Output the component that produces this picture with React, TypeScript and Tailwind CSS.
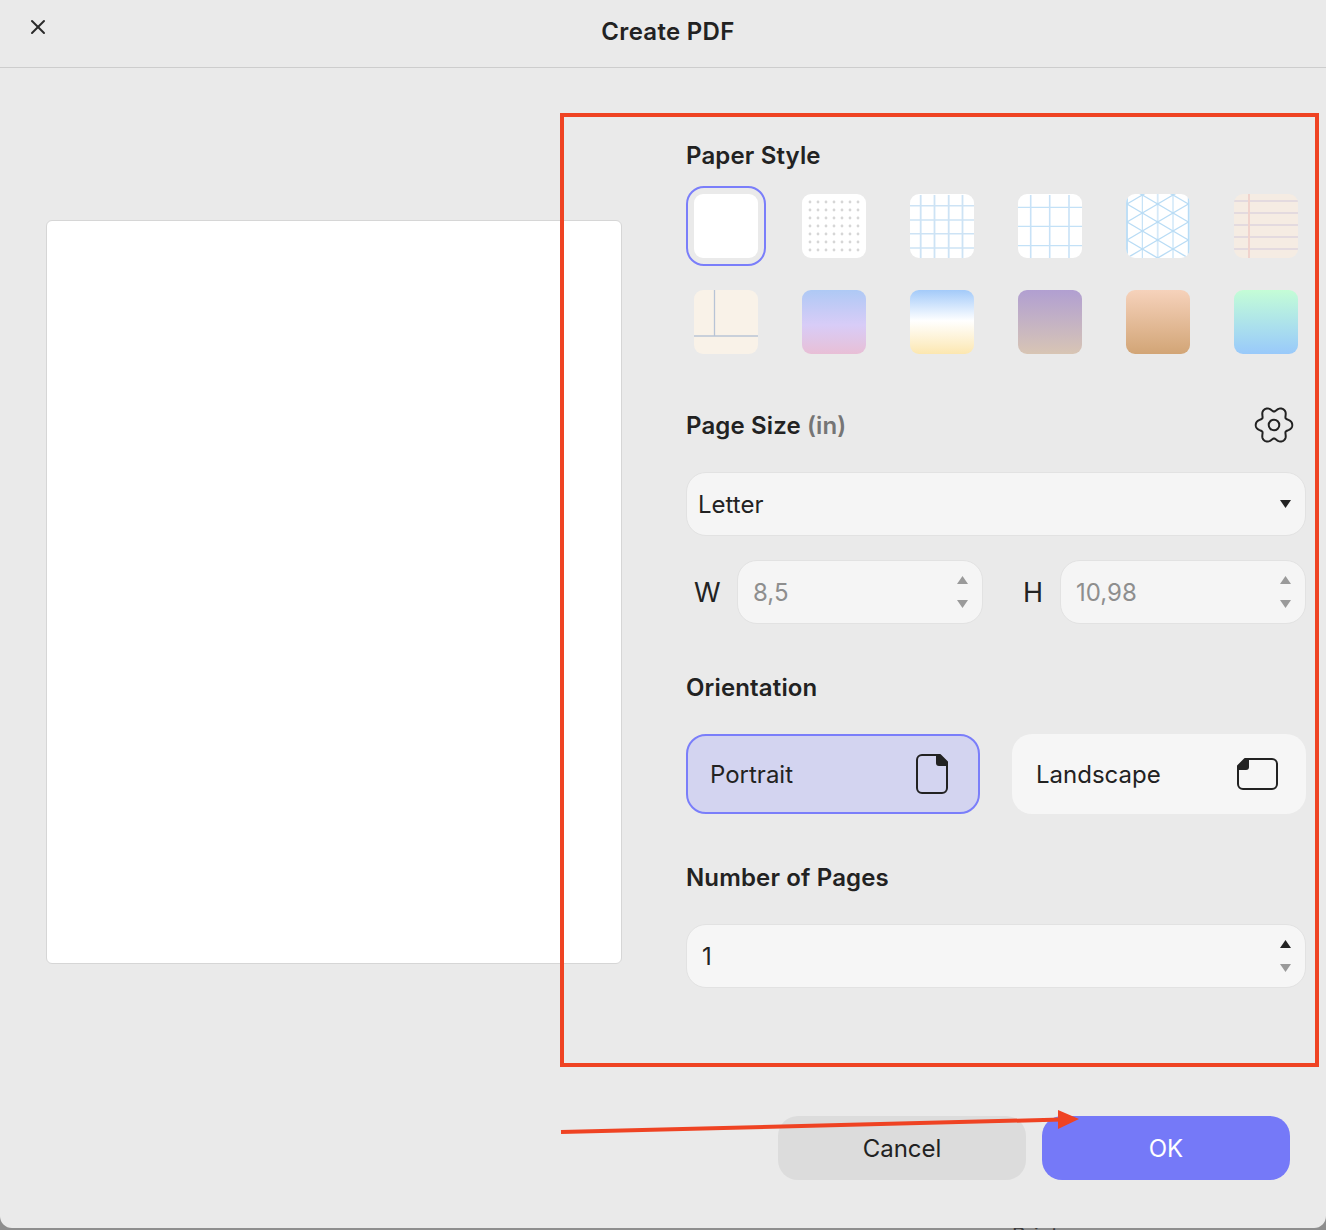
import { X } from 'lucide-react';

const FONT = "font-['Inter','Liberation_Sans',sans-serif]";

const DOTS = [8, 16, 24, 32, 40, 48, 56];
const ISO_TOP = [1, 19, 37, 55, 73];
const ISO_MID = [-8, 10, 28, 46, 64];

// six flat lobes with tight notches, the same outline the reference cog has
const GEAR_PATH =
    Array.from({ length: 180 }, (_, i) => {
        const angle = (i / 180) * Math.PI * 2;
        const radius = 16.2 + 2.4 * Math.cos(6 * angle) - 0.35 * Math.cos(12 * angle);
        const x = 20 + radius * Math.cos(angle);
        const y = 19 + radius * Math.sin(angle);
        return `${i === 0 ? 'M' : 'L'}${x.toFixed(2)} ${y.toFixed(2)}`;
    }).join(' ') + ' Z';

const DotSwatch = () => (
    <svg viewBox="0 0 64 64" className="w-full h-full bg-white">
        {DOTS.map((y) => DOTS.map((x) => <circle key={`${x}-${y}`} cx={x} cy={y} r="1.4" fill="#d6d6d6" />))}
    </svg>
);

const FineGridSwatch = () => (
    <svg viewBox="0 0 64 64" className="w-full h-full bg-white">
        {[11.7, 26, 39.7, 54].map((y) => (
            <line key={y} x1="0" x2="64" y1={y} y2={y} stroke="#cde3f5" strokeWidth="1.6" />
        ))}
        {[10.7, 24.5, 38.7, 52.5].map((x) => (
            <line key={x} x1={x} x2={x} y1="1" y2="64" stroke="#cde3f5" strokeWidth="1.8" />
        ))}
    </svg>
);

const WideGridSwatch = () => (
    <svg viewBox="0 0 64 64" className="w-full h-full bg-white">
        {[13.3, 32.3, 51.7].map((y) => (
            <line key={y} x1="0" x2="64" y1={y} y2={y} stroke="#b5daf5" strokeWidth="1" />
        ))}
        {[12.7, 31.7, 51].map((x) => (
            <line key={x} x1={x} x2={x} y1="1" y2="64" stroke="#c8e2f7" strokeWidth="1.6" />
        ))}
    </svg>
);

const IsoSwatch = () => (
    <svg viewBox="0 0 64 64" className="w-full h-full bg-white">
        {[1, 16.3, 31.7, 47, 62.7].map((x, i) => (
            <line key={x} x1={x} x2={x} y1="0" y2="64" stroke={i === 2 ? '#d6e9f8' : '#b9dcf5'} strokeWidth={i === 1 || i === 3 ? 1 : 1.8} />
        ))}
        {[0, 2].map((col) =>
            ISO_TOP.map((y) => {
                const x = col === 0 ? 16.3 : 47;
                return (
                    <g key={`${col}-${y}`} stroke="#b9dcf5" strokeWidth="1.4">
                        <line x1={x} y1={y} x2={x - 15.3} y2={y + 9} />
                        <line x1={x} y1={y} x2={x + 15.4} y2={y + 9} />
                        <line x1={x} y1={y} x2={x - 15.3} y2={y - 9} />
                        <line x1={x} y1={y} x2={x + 15.4} y2={y - 9} />
                    </g>
                );
            })
        )}
        {ISO_MID.map((y) => (
            <circle key={y} cx="31.7" cy={y} r="1.2" fill="#b9dcf5" />
        ))}
    </svg>
);

const RuledSwatch = () => (
    <svg viewBox="0 0 64 64" className="w-full h-full bg-[#f5ece3]">
        {[7, 19, 31, 43, 55].map((y) => (
            <line key={y} x1="0" x2="64" y1={y} y2={y} stroke="#dcd5de" strokeWidth="1.6" />
        ))}
        <line x1="15" x2="15" y1="0" y2="64" stroke="#f0d3cd" strokeWidth="2" />
    </svg>
);

const CornellSwatch = () => (
    <svg viewBox="0 0 64 64" className="w-full h-full bg-[#f9f2e8]">
        <line x1="20.5" x2="20.5" y1="0" y2="46" stroke="#b8c4d6" strokeWidth="1.3" />
        <line x1="0" x2="64" y1="46" y2="46" stroke="#b8c4d6" strokeWidth="1.3" />
    </svg>
);

const SWATCHES = [
    <div className="w-full h-full bg-white" />,
    <DotSwatch />,
    <FineGridSwatch />,
    <WideGridSwatch />,
    <IsoSwatch />,
    <RuledSwatch />,
    <CornellSwatch />,
    <div className="w-full h-full bg-linear-to-b from-[#aec9f5] via-[#d8ccf7] via-55% to-[#e8bfd6]" />,
    <div className="w-full h-full bg-linear-to-b from-[#a3caf9] via-[#ffffff] via-48% to-[#fce7b0]" />,
    <div className="w-full h-full bg-linear-to-b from-[#b19fd1] to-[#d8c5b4]" />,
    <div className="w-full h-full bg-linear-to-b from-[#f6d2bb] to-[#d2a576]" />,
    <div className="w-full h-full bg-linear-to-b from-[#c4fdd6] to-[#99c9fa]" />,
];

const Caret = ({ up, color }: { up?: boolean; color: string }) => (
    <svg width="11" height="8" viewBox="0 0 11 8" fill={color}>
        <path d={up ? 'M5.5 0 L11 8 H0 Z' : 'M0 0 H11 L5.5 8 Z'} />
    </svg>
);

const Stepper = ({ upColor = '#9a9a9a' }: { upColor?: string }) => (
    <div className="flex flex-col gap-4">
        <Caret up color={upColor} />
        <Caret color="#9a9a9a" />
    </div>
);

const SectionLabel = ({ children }: { children: React.ReactNode }) => (
    <div className="h-8 pt-px flex items-center text-[24px] font-semibold tracking-[0.15px] text-[#222222]">{children}</div>
);

const NumberField = ({ value }: { value: string }) => (
    <div className="w-[246px] h-16 flex items-center justify-between pl-[15px] pr-[14px] rounded-[20px] bg-[#f5f5f5] border border-[#e2e2e2] text-[24px] text-[#8e8e8e]">
        <span className="pt-[2px]">{value}</span>
        <Stepper />
    </div>
);

export default function App() {
    return (
        <div className={`relative w-[1326px] h-[1230px] overflow-hidden flex flex-col bg-[#8e8e8e] ${FONT}`}>
            <div className="h-[1228px] shrink-0 flex flex-col rounded-b-[12px] bg-[#eaeaea]">
                {/* Title bar */}
                <div className="relative h-[68px] shrink-0 flex items-start justify-center pl-[10px] pt-4 border-b border-[#cdcdcd]">
                    <button className="absolute left-[26px] top-[15px] text-[#2a2a2a]">
                        <X size={24} strokeWidth={2} />
                    </button>
                    <h1 className="text-[24px] leading-8 font-semibold tracking-[0.3px] text-[#222222]">Create PDF</h1>
                </div>

                <div className="flex-1 flex">
                    {/* Page preview */}
                    <div className="w-[686px] shrink-0 pl-[46px] pt-[152px]">
                        <div className="w-[576px] h-[744px] bg-white border border-[#d6d6d6] rounded-[6px]" />
                    </div>

                    {/* Options */}
                    <div className="w-[620px] pt-[71px]">
                        <SectionLabel>Paper Style</SectionLabel>
                        <div className="mt-[15px] grid grid-cols-[repeat(6,80px)] gap-x-7 gap-y-4">
                            {SWATCHES.map((swatch, i) => (
                                <div
                                    key={i}
                                    className={`w-20 h-20 flex items-center justify-center rounded-[18px] ${
                                        i === 0 ? 'border-2 border-[#7a7efa]' : ''
                                    }`}
                                >
                                    <div className="w-16 h-16 rounded-[9px] overflow-hidden">{swatch}</div>
                                </div>
                            ))}
                        </div>

                        <div className="mt-[47px] h-8 flex items-center justify-between">
                            <SectionLabel>
                                Page Size<span className="ml-[6px] text-[#757575]">(in)</span>
                            </SectionLabel>
                            <svg width="40" height="38" viewBox="0 0 40 38" fill="none" stroke="#222222" strokeWidth="2" className="mr-3">
                                <path d={GEAR_PATH} strokeLinejoin="round" />
                                <circle cx="20" cy="19" r="5.3" />
                            </svg>
                        </div>

                        <div className="mt-[31px] h-16 flex items-center justify-between pl-[11px] pr-[14px] rounded-[20px] bg-[#f5f5f5] border border-[#e2e2e2] text-[24px] text-[#222222]">
                            <span className="pt-[2px]">Letter</span>
                            <Caret color="#222222" />
                        </div>

                        <div className="mt-6 flex items-center text-[27px] text-[#222222]">
                            <span className="w-[51px] pl-2 pt-[2px]">W</span>
                            <NumberField value="8,5" />
                            <span className="ml-[40px] w-[37px] pt-[2px]">H</span>
                            <NumberField value="10,98" />
                        </div>

                        <div className="mt-[47px]">
                            <SectionLabel>Orientation</SectionLabel>
                        </div>

                        <div className="mt-[31px] flex gap-8">
                            <div className="w-[294px] h-20 flex items-center justify-between pl-[22px] pr-[30px] rounded-[20px] bg-[#d3d4f0] border-2 border-[#7a7efa] text-[24px] text-[#222222]">
                                <span className="pt-[2px]">Portrait</span>
                                <svg width="32" height="40" viewBox="0 0 32 40" fill="none">
                                    <path
                                        d="M6 1 H24 L31 8 V34 A5 5 0 0 1 26 39 H6 A5 5 0 0 1 1 34 V6 A5 5 0 0 1 6 1 Z"
                                        stroke="#222222"
                                        strokeWidth="2"
                                        strokeLinejoin="round"
                                    />
                                    <path d="M20 1 H24 L31 8 V12 H23 A3 3 0 0 1 20 9 Z" fill="#222222" />
                                </svg>
                            </div>
                            <div className="w-[294px] h-20 flex items-center justify-between pl-6 pr-[28px] rounded-[20px] bg-[#f6f6f6] text-[24px] text-[#222222]">
                                <span className="pt-[2px]">Landscape</span>
                                <svg width="41" height="32" viewBox="0 0 41 32" fill="none">
                                    <path
                                        d="M8 1 H35 A5 5 0 0 1 40 6 V26 A5 5 0 0 1 35 31 H6 A5 5 0 0 1 1 26 V8 Z"
                                        stroke="#222222"
                                        strokeWidth="2"
                                        strokeLinejoin="round"
                                    />
                                    <path d="M8 1 H12 V9 A3 3 0 0 1 9 12 H1 V8 Z" fill="#222222" />
                                </svg>
                            </div>
                        </div>

                        <div className="mt-[47px]">
                            <SectionLabel>Number of Pages</SectionLabel>
                        </div>

                        <div className="mt-[31px] h-16 flex items-center justify-between pl-[15px] pr-[14px] rounded-[20px] bg-[#f6f6f6] border border-[#e2e2e2] text-[24px] text-[#222222]">
                            <span className="pt-[2px]">1</span>
                            <Stepper upColor="#222222" />
                        </div>
                    </div>
                </div>

                {/* Footer buttons */}
                <div className="flex justify-end gap-4 pr-9 pb-12">
                    <button className="w-[248px] h-16 pt-[2px] rounded-[20px] bg-[#dcdcdc] text-[24px] text-[#222222]">Cancel</button>
                    <button className="w-[248px] h-16 pt-[2px] rounded-[20px] bg-[#7579f8] text-[24px] text-white">OK</button>
                </div>
            </div>

            {/* Page behind the dialog, only the top of its text shows */}
            <div className="h-[2px] shrink-0 overflow-hidden pl-[1012px]">
                <div className="-mt-[4px] text-[21px] leading-6 text-[#3a3a3a]">Print page</div>
            </div>

            {/* Red annotations drawn over the screenshot */}
            <div className="absolute left-[560px] top-[113px] w-[759px] h-[954px] border-4 border-[#ef4323] pointer-events-none" />
            <svg className="absolute left-0 top-0 pointer-events-none" width="1326" height="1230" fill="none">
                <line x1="561" y1="1132" x2="1062" y2="1119.5" stroke="#ef4323" strokeWidth="4" />
                <path d="M1058 1110 L1079 1119 L1058 1129 Z" fill="#ef4323" />
            </svg>
        </div>
    );
}
